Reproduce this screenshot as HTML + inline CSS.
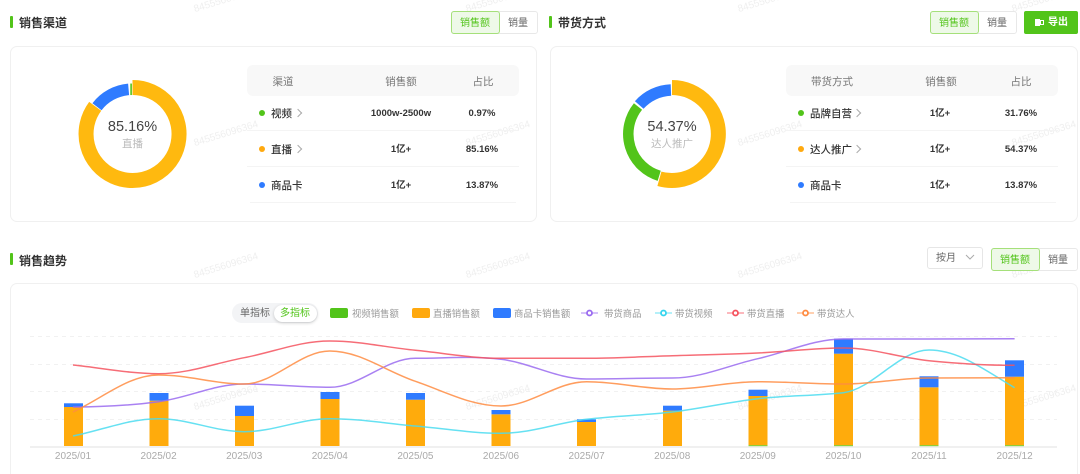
<!DOCTYPE html>
<html lang="zh"><head><meta charset="utf-8"><style>
html,body{margin:0;padding:0;width:1080px;height:474px;overflow:hidden;background:#fff}
body{position:relative;font-family:"Liberation Sans","Noto Sans CJK SC",sans-serif;color:#333}
.a{position:absolute;white-space:nowrap}
.c{position:absolute;white-space:nowrap;transform:translate(-50%,calc(-50% + 1px));line-height:14px}
.bar{position:absolute;left:var(--x);width:3px;background:#52c41a;border-radius:1px}
.t{font-size:12px;font-weight:700;color:#333;transform:translateY(calc(-50% + 1px));line-height:16px}
.card{position:absolute;border:1px solid #f0f0f0;border-radius:7px;box-sizing:border-box;background:#fff}
.tg{position:absolute;height:23px;width:87px;box-sizing:border-box;border:1px solid #e8e8e8;border-radius:3px;background:#fff}
.tg i{position:absolute;left:-1px;top:-1px;width:49px;height:23px;box-sizing:border-box;background:#eef9e8;border:1px solid #a5e07a;border-radius:3px}
.tg b,.tg u{position:absolute;top:11.5px;transform:translate(-50%,-50%);font-size:10px;font-weight:400;text-decoration:none;white-space:nowrap;line-height:14px}
.tg b{left:23px;color:#52c41a}.tg u{left:66px;color:#666}
.th{position:absolute;background:#f8f8f8;border-radius:6px;height:31px;width:272px;top:65px}
.h{font-size:10.5px;color:#777}
.l{font-size:10.5px;color:#333;font-weight:500;transform:translateY(calc(-50% + 1px));line-height:14px}
.v{font-size:9.5px;color:#333;font-weight:700}
.d{position:absolute;width:6px;height:6px;border-radius:50%;transform:translate(-50%,-50%)}
.s{position:absolute;height:1px;width:272px;background:#f4f4f4}
.ar{position:absolute;width:5px;height:5px;border-top:1px solid #aaa;border-right:1px solid #aaa;transform:translate(-50%,-50%) rotate(45deg)}
.lg{font-size:9.4px;color:#999;transform:translateY(calc(-50% + 1px));line-height:14px}
.sw{position:absolute;top:308px;width:18px;height:10px;border-radius:2px}
.xl{font-size:10px;color:#aaa}
.wm{position:absolute;font-size:10px;color:#efefef;transform:translate(-50%,-50%) rotate(-17deg);white-space:nowrap}
</style></head><body>

<div class="card" style="left:10px;top:46px;width:527px;height:176px"></div>
<div class="card" style="left:550px;top:46px;width:528px;height:176px"></div>
<div class="card" style="left:10px;top:283px;width:1068px;height:191px;border-bottom:none;border-radius:7px 7px 0 0"></div>

<div class="wm" style="left:226px;top:0">845556096364</div><div class="wm" style="left:498px;top:0">845556096364</div><div class="wm" style="left:770px;top:0">845556096364</div><div class="wm" style="left:1044px;top:0">845556096364</div>
<div class="wm" style="left:226px;top:134px">845556096364</div><div class="wm" style="left:498px;top:134px">845556096364</div><div class="wm" style="left:770px;top:134px">845556096364</div><div class="wm" style="left:1044px;top:134px">845556096364</div>
<div class="wm" style="left:226px;top:266px">845556096364</div><div class="wm" style="left:498px;top:266px">845556096364</div><div class="wm" style="left:770px;top:266px">845556096364</div><div class="wm" style="left:1044px;top:266px">845556096364</div>
<div class="wm" style="left:226px;top:398px">845556096364</div><div class="wm" style="left:498px;top:398px">845556096364</div><div class="wm" style="left:770px;top:398px">845556096364</div><div class="wm" style="left:1044px;top:398px">845556096364</div>

<div class="bar" style="--x:10px;top:16px;height:12px"></div>
<div class="a t" style="left:19px;top:22px">销售渠道</div>
<div class="tg" style="left:451px;top:11px"><i></i><b>销售额</b><u>销量</u></div>
<svg class="a" style="left:0;top:0" width="1080" height="474" fill="none">
<path d="M132.500 87.500A46.500 46.500 0 1 1 95.200 106.300" stroke="#ffb90f" stroke-width="15"/>
<path d="M97 106.700A44.750 44.750 0 0 1 128.600 89.400" stroke="#2f7bff" stroke-width="11.500"/>
<path d="M130.300 89.300L131.900 89.300" stroke="#52c41a" stroke-width="11.500"/>
<path d="M672 87.500A46.500 46.500 0 1 1 659.400 178.800" stroke="#ffb90f" stroke-width="15"/>
<path d="M659.200 175.800A43.750 43.750 0 0 1 638 106.500" stroke="#52c41a" stroke-width="10.500"/>
<path d="M639.200 105A44.500 44.500 0 0 1 670.900 90" stroke="#2f7bff" stroke-width="11.500"/>
</svg>
<div class="c" style="left:132.500px;top:126px;font-size:14.500px;color:#444">85.16%</div>
<div class="c" style="left:132.500px;top:143px;font-size:10.500px;color:#bbb">直播</div>

<div class="th" style="left:247px"></div>
<div class="c h" style="left:283px;top:80.500px">渠道</div>
<div class="c h" style="left:401px;top:80.500px">销售额</div>
<div class="c h" style="left:483px;top:80.500px">占比</div>
<div class="d" style="left:262px;top:113px;background:#52c41a"></div><div class="a l" style="left:271px;top:113px">视频</div><div class="ar" style="left:298px;top:113px"></div>
<div class="c v" style="left:401px;top:113px">1000w-2500w</div><div class="c v" style="left:482px;top:113px">0.97%</div>
<div class="s" style="left:247px;top:130px"></div>
<div class="d" style="left:262px;top:149px;background:#ffa90f"></div><div class="a l" style="left:271px;top:149px">直播</div><div class="ar" style="left:298px;top:149px"></div>
<div class="c v" style="left:401px;top:149px">1亿+</div><div class="c v" style="left:482px;top:149px">85.16%</div>
<div class="s" style="left:247px;top:166px"></div>
<div class="d" style="left:262px;top:184.500px;background:#2f7bff"></div><div class="a l" style="left:271px;top:184.500px">商品卡</div>
<div class="c v" style="left:401px;top:184.500px">1亿+</div><div class="c v" style="left:482px;top:184.500px">13.87%</div>
<div class="s" style="left:250px;top:202px;width:266px"></div>

<div class="bar" style="--x:549px;top:16px;height:12px"></div>
<div class="a t" style="left:558px;top:22px">带货方式</div>
<div class="tg" style="left:930px;top:11px"><i></i><b>销售额</b><u>销量</u></div>
<div class="a" style="left:1024px;top:11px;width:54px;height:23px;background:#52c41a;border-radius:2px"></div>
<svg class="a" style="left:1035px;top:18px" width="10" height="9"><rect x="0" y="1" width="5" height="7" fill="#fff"/><rect x="5.500" y="2.500" width="3" height="4" fill="none" stroke="#fff"/></svg>
<div class="c" style="left:1058px;top:22px;font-size:10px;color:#fff;font-weight:700">导出</div>
<div class="c" style="left:672px;top:126px;font-size:14.500px;color:#444">54.37%</div>
<div class="c" style="left:672px;top:143px;font-size:10.500px;color:#bbb">达人推广</div>

<div class="th" style="left:786px"></div>
<div class="c h" style="left:832px;top:80.500px">带货方式</div>
<div class="c h" style="left:941px;top:80.500px">销售额</div>
<div class="c h" style="left:1021px;top:80.500px">占比</div>
<div class="d" style="left:801px;top:113px;background:#52c41a"></div><div class="a l" style="left:810px;top:113px">品牌自营</div><div class="ar" style="left:857px;top:113px"></div>
<div class="c v" style="left:940px;top:113px">1亿+</div><div class="c v" style="left:1021px;top:113px">31.76%</div>
<div class="s" style="left:786px;top:130px"></div>
<div class="d" style="left:801px;top:149px;background:#ffa90f"></div><div class="a l" style="left:810px;top:149px">达人推广</div><div class="ar" style="left:857px;top:149px"></div>
<div class="c v" style="left:940px;top:149px">1亿+</div><div class="c v" style="left:1021px;top:149px">54.37%</div>
<div class="s" style="left:786px;top:166px"></div>
<div class="d" style="left:801px;top:184.500px;background:#2f7bff"></div><div class="a l" style="left:810px;top:184.500px">商品卡</div>
<div class="c v" style="left:940px;top:184.500px">1亿+</div><div class="c v" style="left:1021px;top:184.500px">13.87%</div>
<div class="s" style="left:790px;top:202px;width:266px"></div>

<div class="bar" style="--x:10px;top:253px;height:12px"></div>
<div class="a t" style="left:19px;top:259.500px">销售趋势</div>
<div class="a" style="left:927px;top:247px;width:56px;height:22px;box-sizing:border-box;border:1px solid #e6e6e6;border-radius:3px;background:#fff"></div>
<div class="c" style="left:946px;top:258px;font-size:10px;color:#666">按月</div>
<svg class="a" style="left:965px;top:254px" width="10" height="7" fill="none"><path d="M1 1L5 5L9 1" stroke="#aaa"/></svg>
<div class="tg" style="left:991px;top:248px"><i></i><b>销售额</b><u>销量</u></div>

<div class="a" style="left:232px;top:303px;width:86px;height:20px;background:#f3f4f6;border-radius:10px"></div>
<div class="a" style="left:274px;top:305px;width:43px;height:17px;background:#fff;border-radius:9px;box-shadow:0 1px 3px rgba(0,0,0,.2)"></div>
<div class="c" style="left:255px;top:313px;font-size:10px;color:#666">单指标</div>
<div class="c" style="left:295px;top:313px;font-size:10px;color:#52c41a">多指标</div>

<div class="sw" style="left:330px;background:#52c41a"></div><div class="a lg" style="left:352px;top:313px">视频销售额</div>
<div class="sw" style="left:412px;background:#ffa90f"></div><div class="a lg" style="left:433px;top:313px">直播销售额</div>
<div class="sw" style="left:493px;background:#2f7bff"></div><div class="a lg" style="left:514px;top:313px">商品卡销售额</div>
<div class="a lg" style="left:604px;top:313px">带货商品</div>
<div class="a lg" style="left:675px;top:313px">带货视频</div>
<div class="a lg" style="left:747px;top:313px">带货直播</div>
<div class="a lg" style="left:817px;top:313px">带货达人</div>

<svg class="a" style="left:0;top:0" width="1080" height="474" fill="none">
<g stroke-opacity=".55" stroke-width="1.500">
<path d="M581 313H598" stroke="#9a6bf0"/><path d="M655 313H672" stroke="#4bdcf0"/><path d="M727 313H744" stroke="#f5535f"/><path d="M797 313H814" stroke="#ff8c42"/>
</g>
<g fill="#fff" stroke-width="1.800">
<circle cx="589.500" cy="313" r="2.500" stroke="#9a6bf0"/><circle cx="663.500" cy="313" r="2.500" stroke="#35d5ee"/><circle cx="735.500" cy="313" r="2.500" stroke="#f5535f"/><circle cx="805.500" cy="313" r="2.500" stroke="#ff8c42"/>
</g>
<g stroke="#f1f1f1" stroke-dasharray="4 4"><path d="M30 336.500H1057M30 364.500H1057M30 391.500H1057M30 419.500H1057"/></g>
<path d="M30 447H1057" stroke="#ececec" stroke-width="1.500"/>
<g fill="#ffab0c">
<rect x="64" y="407" width="19" height="39"/><rect x="149.500" y="400.700" width="19" height="45.300"/><rect x="235" y="416" width="19" height="30"/><rect x="320.500" y="399" width="19" height="47"/><rect x="406" y="399.700" width="19" height="46.300"/><rect x="491.500" y="414.300" width="19" height="31.700"/><rect x="577" y="422" width="19" height="24"/><rect x="663" y="410.700" width="19" height="35.300"/><rect x="748.500" y="396" width="19" height="50"/><rect x="834" y="353.700" width="19" height="92.300"/><rect x="919.500" y="387.300" width="19" height="58.700"/><rect x="1005" y="376.700" width="19" height="69.300"/>
</g>
<g fill="#2f7bff">
<rect x="64" y="403.300" width="19" height="3.700"/><rect x="149.500" y="393" width="19" height="7.700"/><rect x="235" y="405.700" width="19" height="10.300"/><rect x="320.500" y="392" width="19" height="7"/><rect x="406" y="393" width="19" height="6.700"/><rect x="491.500" y="410" width="19" height="4.300"/><rect x="577" y="419.300" width="19" height="2.700"/><rect x="663" y="405.700" width="19" height="5"/><rect x="748.500" y="389.700" width="19" height="6.300"/><rect x="834" y="338.700" width="19" height="15"/><rect x="919.500" y="376.300" width="19" height="11"/><rect x="1005" y="360.300" width="19" height="16.400"/>
</g>
<g fill="#8fce3a"><rect x="748.500" y="445" width="19" height="1.200"/><rect x="834" y="445" width="19" height="1.200"/><rect x="919.500" y="445" width="19" height="1.200"/><rect x="1005" y="445" width="19" height="1.200"/></g>
<g stroke-width="1.500" stroke-opacity=".85">
<path stroke="#9a6bf0" d="M73 407C103 407 128.600 405.700 158.600 401.700C188.600 397.700 214.200 384 244.200 384C274.200 384 299.800 387.300 329.800 387.300C359.800 387.300 385.400 358.300 415.400 358.300C445.400 358.300 471 355.700 501 359.300C531 362.900 556.600 379 586.600 379C616.600 379 642.200 378 672.200 378C702.200 378 727.800 365.500 757.800 358.700C787.800 351.900 813.400 339 843.400 339C873.400 339 899 339 929 339C959 339 984.600 338.700 1014.600 338.700"/>
<path stroke="#4bdcf0" d="M73 436C103 430 128.600 418.700 158.600 418.700C188.600 418.700 214.200 431.700 244.200 431.700C274.200 431.700 299.800 418.700 329.800 418.700C359.800 418.700 385.400 423.400 415.400 426C445.400 428.600 471 433.300 501 433.300C531 433.300 556.600 423 586.600 419.300C616.600 415.600 642.200 415.600 672.200 412C702.200 408.400 727.800 402.100 757.800 398.700C787.800 395.300 813.400 396 843.400 392.700C873.400 389 899 350 929 350C959 350 984.600 370 1014.600 387.700"/>
<path stroke="#f5535f" d="M73 365C103 368 128.600 373.700 158.600 373.700C188.600 373.700 214.200 363.400 244.200 357.700C274.200 352 299.800 341 329.800 341C359.800 341 385.400 347.300 415.400 350.300C445.400 353.300 471 358.300 501 358.300C531 358.300 556.600 358.300 586.600 358.300C616.600 358.300 642.200 356.600 672.200 355.700C702.200 354.800 727.800 354.300 757.800 353C787.800 351.700 813.400 348 843.400 348C873.400 348 899 357.700 929 360.700C959 363.700 984.600 365.300 1014.600 365.300"/>
<path stroke="#ff8c42" d="M73 412C103 398 128.600 375 158.600 375C188.600 375 214.200 384 244.200 384C274.200 384 299.800 351 329.800 351C359.800 351 385.400 371 415.400 381.300C445.400 391.600 471 406 501 406C531 406 556.600 381.700 586.600 381.700C616.600 381.700 642.200 389 672.200 389C702.200 389 727.800 381.700 757.800 381.700C787.800 381.700 813.400 384 843.400 384C873.400 384 899 378 929 378C959 378 984.600 377.700 1014.600 377.700"/>
</g>
</svg>

<div class="c xl" style="left:73px;top:456px">2025/01</div>
<div class="c xl" style="left:158.600px;top:456px">2025/02</div>
<div class="c xl" style="left:244.200px;top:456px">2025/03</div>
<div class="c xl" style="left:329.800px;top:456px">2025/04</div>
<div class="c xl" style="left:415.400px;top:456px">2025/05</div>
<div class="c xl" style="left:501px;top:456px">2025/06</div>
<div class="c xl" style="left:586.600px;top:456px">2025/07</div>
<div class="c xl" style="left:672.200px;top:456px">2025/08</div>
<div class="c xl" style="left:757.800px;top:456px">2025/09</div>
<div class="c xl" style="left:843.400px;top:456px">2025/10</div>
<div class="c xl" style="left:929px;top:456px">2025/11</div>
<div class="c xl" style="left:1014.600px;top:456px">2025/12</div>
</body></html>
